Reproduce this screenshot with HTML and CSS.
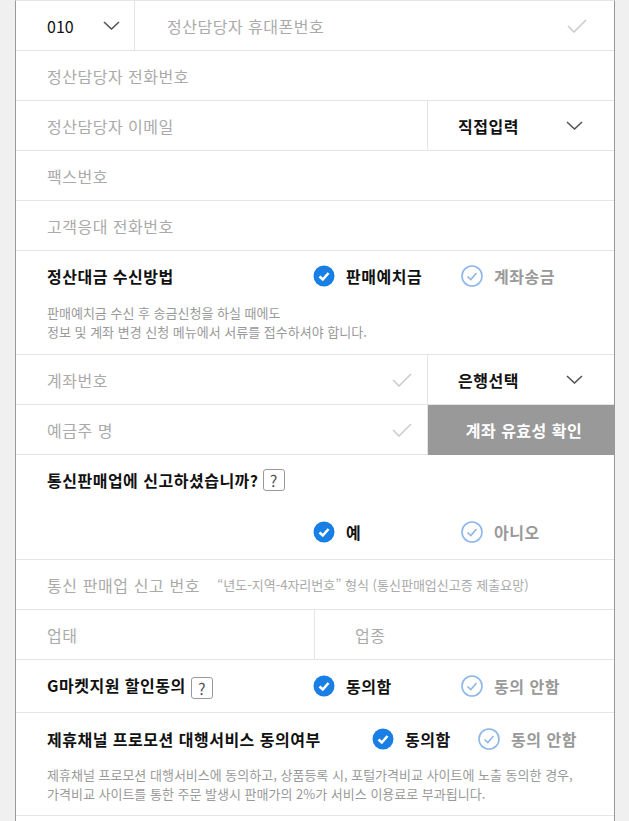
FILE: index.html
```html
<!DOCTYPE html>
<html lang="ko">
<head>
  <meta charset="UTF-8" />
  <meta name="viewport" content="width=device-width, initial-scale=1.0" />
  <title>정산 정보 입력</title>
  <link rel="stylesheet" href="styles.css">
</head>
<body>
  <div class="form">
    <!-- 휴대폰 -->
    <div class="row">
      <div class="cell cell-phone">
        <span class="value num">010</span>
        <svg class="chevron" width="17" height="9" viewBox="0 0 17 9"><polyline points="1,1 8.5,8 16,1" /></svg>
      </div>
      <div class="cell cell-input">
        <span class="placeholder">정산담당자 휴대폰번호</span>
        <svg class="valid" width="20" height="14" viewBox="0 0 20 14"><polyline points="1,7 7,13 19,1" /></svg>
      </div>
    </div>

    <div class="row">
      <div class="cell cell-input cell-first">
        <span class="placeholder">정산담당자 전화번호</span>
      </div>
    </div>

    <div class="row">
      <div class="cell cell-input cell-first cell-border">
        <span class="placeholder">정산담당자 이메일</span>
      </div>
      <div class="cell cell-select">
        <span class="value bold">직접입력</span>
        <svg class="chevron" width="17" height="9" viewBox="0 0 17 9"><polyline points="1,1 8.5,8 16,1" /></svg>
      </div>
    </div>

    <div class="row">
      <div class="cell cell-input cell-first">
        <span class="placeholder">팩스번호</span>
      </div>
    </div>

    <div class="row">
      <div class="cell cell-input cell-first">
        <span class="placeholder">고객응대 전화번호</span>
      </div>
    </div>

    <!-- 정산대금 수신방법 -->
    <div class="block">
      <div class="radio-line">
        <span class="title">정산대금 수신방법</span>
        <label class="radio on">
          <svg width="22" height="22" viewBox="0 0 22 22"><circle cx="11" cy="11" r="10.5" /><polyline points="6.5,11.5 9.8,14.5 15.5,8" /></svg>
          판매예치금
        </label>
        <label class="radio">
          <svg width="22" height="22" viewBox="0 0 22 22"><circle cx="11" cy="11" r="10" /><polyline points="6.5,11.5 9.8,14.5 15.5,8" /></svg>
          계좌송금
        </label>
      </div>
      <p class="note">판매예치금 수신 후 송금신청을 하실 때에도<br>정보 및 계좌 변경 신청 메뉴에서 서류를 접수하셔야 합니다.</p>
    </div>

    <div class="row">
      <div class="cell cell-input cell-first cell-border cell-account">
        <span class="placeholder">계좌번호</span>
        <svg class="valid" width="20" height="14" viewBox="0 0 20 14"><polyline points="1,7 7,13 19,1" /></svg>
      </div>
      <div class="cell cell-select">
        <span class="value bold">은행선택</span>
        <svg class="chevron" width="17" height="9" viewBox="0 0 17 9"><polyline points="1,1 8.5,8 16,1" /></svg>
      </div>
    </div>

    <div class="row">
      <div class="cell cell-input cell-first cell-border cell-account">
        <span class="placeholder">예금주 명</span>
        <svg class="valid" width="20" height="14" viewBox="0 0 20 14"><polyline points="1,7 7,13 19,1" /></svg>
      </div>
      <button class="btn-check">계좌 유효성 확인</button>
    </div>

    <!-- 통신판매업 -->
    <div class="block">
      <div class="title-line">
        <span class="title">통신판매업에 신고하셨습니까?</span>
        <span class="help">?</span>
      </div>
      <div class="radio-line radio-only">
        <span></span>
        <label class="radio on">
          <svg width="22" height="22" viewBox="0 0 22 22"><circle cx="11" cy="11" r="10.5" /><polyline points="6.5,11.5 9.8,14.5 15.5,8" /></svg>
          예
        </label>
        <label class="radio">
          <svg width="22" height="22" viewBox="0 0 22 22"><circle cx="11" cy="11" r="10" /><polyline points="6.5,11.5 9.8,14.5 15.5,8" /></svg>
          아니오
        </label>
      </div>
    </div>

    <div class="row">
      <div class="cell cell-input cell-first">
        <span class="placeholder spaced">통신 판매업 신고 번호</span>
        <span class="hint">“년도-지역-4자리번호” 형식 (통신판매업신고증 제출요망)</span>
      </div>
    </div>

    <div class="row">
      <div class="cell cell-input cell-first cell-border cell-half">
        <span class="placeholder">업태</span>
      </div>
      <div class="cell cell-input cell-kind">
        <span class="placeholder">업종</span>
      </div>
    </div>

    <!-- 동의 -->
    <div class="block">
      <div class="radio-line radio-tall">
        <span class="title">G마켓지원 할인동의 <span class="help">?</span></span>
        <label class="radio on">
          <svg width="22" height="22" viewBox="0 0 22 22"><circle cx="11" cy="11" r="10.5" /><polyline points="6.5,11.5 9.8,14.5 15.5,8" /></svg>
          동의함
        </label>
        <label class="radio">
          <svg width="22" height="22" viewBox="0 0 22 22"><circle cx="11" cy="11" r="10" /><polyline points="6.5,11.5 9.8,14.5 15.5,8" /></svg>
          동의 안함
        </label>
      </div>
    </div>

    <div class="block">
      <div class="radio-line radio-wide">
        <span class="title">제휴채널 프로모션 대행서비스 동의여부</span>
        <label class="radio on">
          <svg width="22" height="22" viewBox="0 0 22 22"><circle cx="11" cy="11" r="10.5" /><polyline points="6.5,11.5 9.8,14.5 15.5,8" /></svg>
          동의함
        </label>
        <label class="radio">
          <svg width="22" height="22" viewBox="0 0 22 22"><circle cx="11" cy="11" r="10" /><polyline points="6.5,11.5 9.8,14.5 15.5,8" /></svg>
          동의 안함
        </label>
      </div>
      <p class="note note-last">제휴채널 프로모션 대행서비스에 동의하고, 상품등록 시, 포털가격비교 사이트에 노출 동의한 경우,<br>가격비교 사이트를 통한 주문 발생시 판매가의 2%가 서비스 이용료로 부과됩니다.</p>
    </div>
  </div>
</body>
</html>
```

FILE: styles.css
```css
* {
  box-sizing: border-box;
}
body {
  margin: 0;
  background: #f0f0f0;
  font-family: "Noto Sans CJK KR", "Liberation Sans", sans-serif;
  font-size: 16px;
  letter-spacing: 0.5px;
  color: #111;
}
.form {
  width: 600px;
  min-height: 100vh;
  margin-left: 15px;
  background: #fff;
  border-left: 1px solid #999;
  border-right: 1px solid #999;
  border-top: 1px solid #e5e5e5;
}
.row {
  display: flex;
  height: 50px;
  border-bottom: 1px solid #e5e5e5;
}
.cell {
  display: flex;
  align-items: center;
  height: 100%;
}
.cell-border { border-right: 1px solid #e5e5e5; }
.cell-phone {
  width: 119px;
  padding: 0 14px 0 31px;
  justify-content: space-between;
  border-right: 1px solid #e5e5e5;
}
.cell-input {
  flex: 1;
  padding: 0 27px 0 32px;
  justify-content: space-between;
}
.cell-first { padding-left: 31px; justify-content: flex-start; }
.cell-first .valid { margin-left: auto; }
.cell-account { padding-right: 15px; }
.cell-half { flex: none; width: 299px; }
.cell-kind { padding-left: 40px; }
.cell-select {
  width: 186px;
  padding: 0 31px 0 30px;
  justify-content: space-between;
}
.value { color: #111; }
.num { letter-spacing: 0; }
.bold { font-weight: bold; }
.placeholder { color: #aaa; }
.spaced { letter-spacing: 0.6px; }
.hint {
  margin-left: 17px;
  font-size: 13px;
  letter-spacing: 0;
  color: #aaa;
}
.chevron polyline {
  fill: none;
  stroke: #555;
  stroke-width: 1.6;
}
.valid polyline {
  fill: none;
  stroke: #ccc;
  stroke-width: 1.6;
}
.btn-check {
  width: 186px;
  height: 50px;
  margin-bottom: -1px;
  border: none;
  background: #999;
  color: #fff;
  font-family: inherit;
  font-size: 16px;
  font-weight: bold;
  letter-spacing: 0.5px;
  padding: 0 0 0 6px;
}
.block {
  border-bottom: 1px solid #e5e5e5;
}
.title { font-weight: bold; }
.title-line {
  display: flex;
  align-items: center;
  gap: 4px;
  height: 50px;
  padding-left: 31px;
}
.help {
  display: inline-flex;
  align-items: center;
  justify-content: center;
  width: 22px;
  height: 22px;
  border: 1px solid #999;
  border-radius: 3px;
  color: #555;
  font-weight: normal;
  font-size: 16px;
  letter-spacing: 0;
  vertical-align: middle;
}
.radio-line {
  display: grid;
  grid-template-columns: 266px 148px 1fr;
  align-items: center;
  height: 50px;
  padding-left: 31px;
}
.radio-only { height: 54px; }
.radio-tall { height: 52px; }
.radio-wide {
  grid-template-columns: 325px 106px 1fr;
  height: 51px;
}
.radio {
  display: flex;
  align-items: center;
  gap: 11px;
  font-weight: bold;
  color: #999;
}
.radio svg circle {
  fill: #fff;
  stroke: #8db7e8;
  stroke-width: 1.6;
}
.radio svg polyline {
  fill: none;
  stroke: #8db7e8;
  stroke-width: 1.6;
}
.radio.on { color: #111; }
.radio.on svg circle {
  fill: #1a7fe4;
  stroke: none;
}
.radio.on svg polyline {
  stroke: #fff;
  stroke-width: 2.6;
}
.note {
  margin: 2px 0 0;
  padding: 0 31px 13px;
  font-size: 13px;
  line-height: 19px;
  letter-spacing: 0;
  color: #999;
}
.note-last {
  margin-top: 1px;
  padding-bottom: 12px;
}
```
